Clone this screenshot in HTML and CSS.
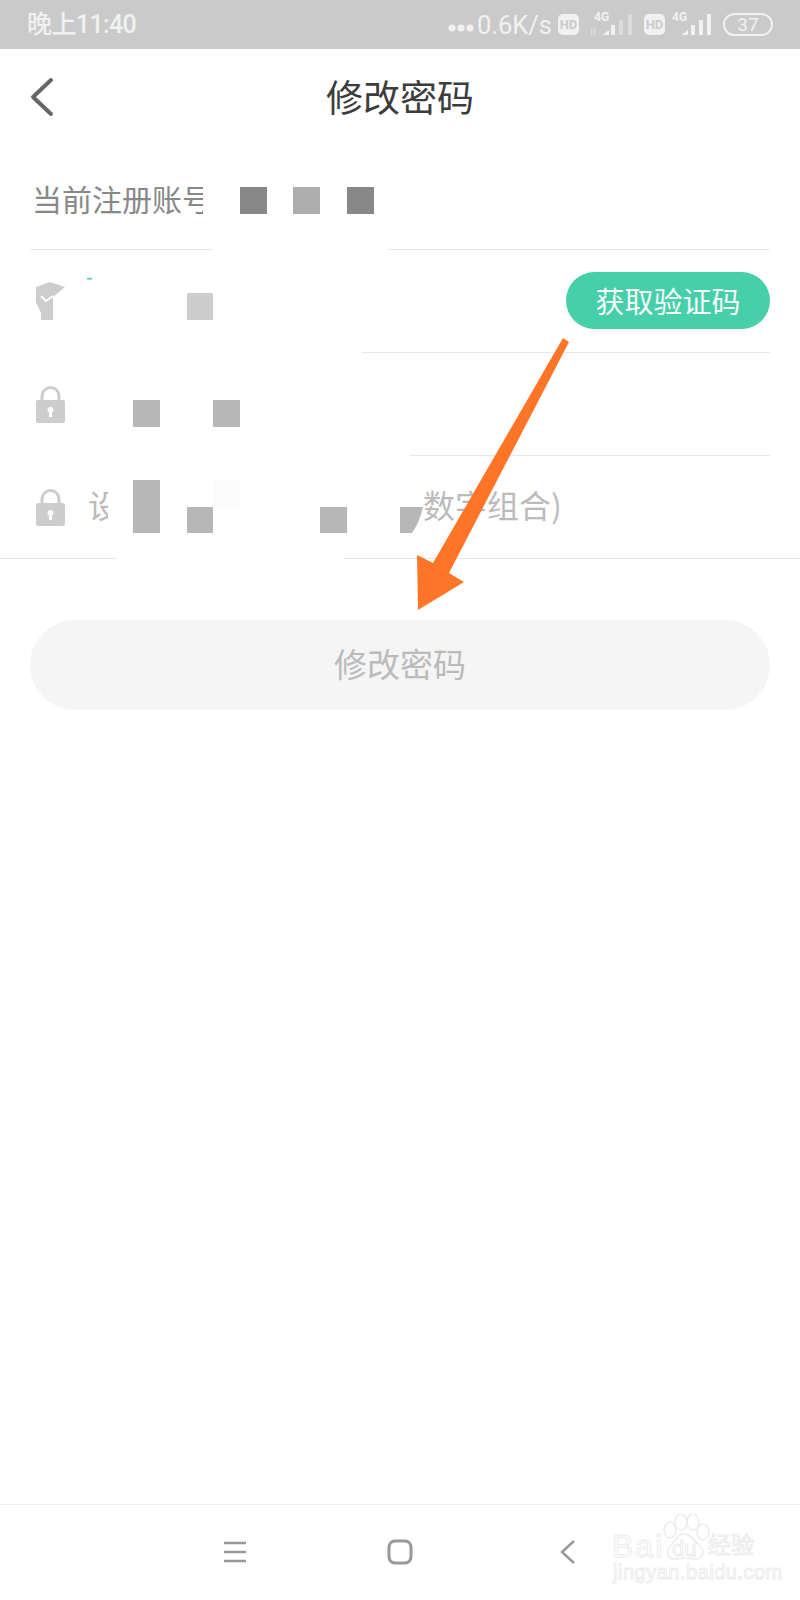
FILE: index.html
```html
<!DOCTYPE html>
<html lang="zh-CN">
<head>
    <meta charset="UTF-8">
    <title>修改密码</title>
    <link rel="stylesheet" href="styles.css">
</head>
<body>
    <div class="page">
        <!-- статус -->
        <div class="status-bar">
            <span class="time">晚上11:40</span>
            <div class="status-right">
                <svg class="dots" width="26" height="8" viewBox="0 0 26 8"><circle cx="4" cy="4" r="3.6"/><circle cx="13" cy="4" r="3.6"/><circle cx="22" cy="4" r="3.6"/></svg>
                <span class="speed">0.6K/s</span>
                <span class="hd hd-first">HD</span>
                <svg class="sim sim-first" width="44" height="34" viewBox="0 -4 44 34">
                    <text x="5" y="9" class="sim-text">4G</text>
                    <rect x="2" y="16" width="1.5" height="7" class="dim"/>
                    <rect x="5" y="16" width="1.5" height="7" class="dim"/>
                    <polygon points="14,22.500 20,18 20,23 14,23"/>
                    <rect x="22" y="13" width="4" height="10"/>
                    <rect x="30" y="8" width="4" height="15" class="dim"/>
                    <rect x="39" y="2" width="4" height="21" class="dim"/>
                </svg>
                <span class="hd hd-second">HD</span>
                <svg class="sim sim-second" width="40" height="34" viewBox="0 -4 40 34">
                    <text x="0" y="9" class="sim-text">4G</text>
                    <polygon points="10,22.500 16,18 16,23 10,23"/>
                    <rect x="19" y="13" width="4" height="10"/>
                    <rect x="27" y="8" width="4" height="15"/>
                    <rect x="35" y="2" width="4" height="21"/>
                </svg>
                <span class="battery">37</span>
            </div>
        </div>

        <header class="top">
            <svg class="back" width="24" height="40" viewBox="0 0 24 40"><polyline points="21,3 3,20 21,37"/></svg>
            <h1>修改密码</h1>
        </header>

        <div class="row">
            <span class="account-label">当前注册账号</span>
        </div>

        <div class="row">
            <svg class="field-icon" width="29" height="38" viewBox="0 0 29 38">
                <polygon points="0,5 14,0 29,5 17,15 17,38 5,38 5,31 0,20"/>
                <polyline points="5,14 10,19 17,14" class="tick"/>
            </svg>
            <button class="code-btn">获取验证码</button>
        </div>

        <div class="row">
            <svg class="field-icon" width="29" height="37" viewBox="0 0 29 37">
                <path d="M6 16V10a8.500 8.500 0 0 1 17 0v6" class="shackle"/>
                <rect x="0" y="14" width="29" height="23" rx="2"/>
                <path d="M14.500 21a3 3 0 0 1 1.500 5.600V31h-3v-4.400A3 3 0 0 1 14.500 21z" class="keyhole"/>
            </svg>
        </div>

        <div class="row row-last">
            <svg class="field-icon" width="29" height="37" viewBox="0 0 29 37">
                <path d="M6 16V10a8.500 8.500 0 0 1 17 0v6" class="shackle"/>
                <rect x="0" y="14" width="29" height="23" rx="2"/>
                <path d="M14.500 21a3 3 0 0 1 1.500 5.600V31h-3v-4.400A3 3 0 0 1 14.500 21z" class="keyhole"/>
            </svg>
            <span class="hint hint-first">设</span>
            <span class="hint hint-end">数字组合)</span>
        </div>

        <button class="submit">修改密码</button>

        <div class="spacer"></div>

        <nav class="bottom-nav">
            <svg class="nav-menu" width="24" height="24" viewBox="0 0 24 24"><path d="M1 3h22M1 12h22M1 21h22"/></svg>
            <svg class="nav-home" width="26" height="26" viewBox="0 0 26 26"><rect x="2" y="2" width="22" height="22" rx="6"/></svg>
            <svg class="nav-back" width="16" height="26" viewBox="0 0 16 26"><polyline points="14,2 2,13 14,24"/></svg>
        </nav>

        <!-- мозаика и стрелка поверх скриншота -->
        <svg class="overlay" width="800" height="1600" viewBox="0 0 800 1600">
            <rect x="203" y="175" width="30" height="45" fill="#fff"/>
            <rect x="108" y="480" width="25" height="50" fill="#fff"/>
            <rect x="213" y="245" width="175" height="8" fill="#fff"/>
            <rect x="0" y="350" width="362" height="5" fill="#fff"/>
            <rect x="0" y="453" width="410" height="5" fill="#fff"/>
            <rect x="117" y="556" width="226" height="5" fill="#fff"/>

            <rect x="240" y="187" width="27" height="27" fill="#888"/>
            <rect x="293" y="187" width="27" height="27" fill="#aeaeae"/>
            <rect x="347" y="187" width="27" height="27" fill="#888"/>
            <rect x="187" y="293" width="26" height="27" fill="#cdcdcd"/>
            <rect x="133" y="400" width="27" height="27" fill="#b7b7b7"/>
            <rect x="213" y="400" width="27" height="27" fill="#b7b7b7"/>
            <rect x="133" y="480" width="27" height="53" fill="#b7b7b7"/>
            <rect x="213" y="480" width="27" height="27" fill="#fcfcfc"/>
            <rect x="187" y="507" width="26" height="26" fill="#b7b7b7"/>
            <rect x="320" y="507" width="27" height="26" fill="#b7b7b7"/>
            <path d="M400 507h23c-2 9-6 19-11 26h-12z" fill="#b7b7b7"/>
            <rect x="87" y="278" width="5" height="1.500" fill="#46cfa9"/>

            <polygon points="563,338 569,342 449,573 464,582 418,610 417,555 433,563" fill="#ff7527"/>
        </svg>

        <div class="watermark">
            <svg class="paw" width="50" height="50" viewBox="0 0 50 50">
                <ellipse cx="10" cy="16" rx="6" ry="8"/>
                <ellipse cx="21" cy="8" rx="6" ry="8"/>
                <ellipse cx="33" cy="8" rx="6" ry="8"/>
                <ellipse cx="43" cy="18" rx="6" ry="8"/>
                <path d="M24 20c8 0 10 8 16 12 6 6 2 14-6 13-6-1-12-1-18 0-8 1-11-7-6-13 6-4 6-12 14-12z"/>
            </svg>
            <span class="wm-bai">Bai</span>
            <span class="wm-du">du</span>
            <span class="wm-jy">经验</span>
            <span class="wm-url">jingyan.baidu.com</span>
        </div>
    </div>
</body>
</html>
```

FILE: styles.css
```css
* {
    margin: 0;
    padding: 0;
    box-sizing: border-box;
    font-family: "Noto Sans CJK SC", "Noto Sans", sans-serif;
}

body {
    background: #fff;
}

.page {
    width: 800px;
    height: 1600px;
    position: relative;
    display: flex;
    flex-direction: column;
    overflow: hidden;
}

/* Статус */
.status-bar {
    height: 49px;
    background: #cacaca;
    color: #f1f1f1;
    display: flex;
    align-items: center;
    justify-content: space-between;
    padding: 0 27px;
}

.time {
    font-family: Roboto, "Noto Sans CJK SC", sans-serif;
    font-size: 25px;
    font-weight: 500;
    letter-spacing: -0.6px;
    line-height: 49px;
}

.status-right {
    display: flex;
    align-items: center;
}

.dots {
    fill: #f1f1f1;
    margin-top: 6px;
}

.speed {
    font-family: Roboto, sans-serif;
    font-size: 25.5px;
    margin-left: 3px;
}

.hd {
    width: 21px;
    height: 21px;
    border-radius: 5px;
    background: #f1f1f1;
    color: #cacaca;
    font-family: Roboto, sans-serif;
    font-size: 13px;
    font-weight: 700;
    line-height: 21px;
    text-align: center;
}

.hd-first {
    margin-left: 6px;
}

.sim {
    fill: #f1f1f1;
}

.sim-first {
    margin-left: 10px;
}

.sim-text {
    font-family: Roboto, sans-serif;
    font-size: 12px;
    font-weight: 700;
}

.dim {
    fill: #dcdcdc;
}

.hd-second {
    margin-left: 11px;
}

.sim-second {
    margin-left: 7px;
}

.battery {
    width: 50px;
    height: 23px;
    margin-left: 11px;
    border: 2px solid #f1f1f1;
    border-radius: 12px;
    font-family: Roboto, sans-serif;
    font-size: 19px;
    line-height: 19px;
    text-align: center;
}

/* Шапка */
.top {
    height: 98px;
    display: flex;
    align-items: center;
    justify-content: center;
    position: relative;
}

.top h1 {
    font-size: 37px;
    font-weight: 400;
    color: #3c3c3c;
    margin-bottom: 4px;
}

.back {
    position: absolute;
    left: 30px;
    top: 28px;
    fill: none;
    stroke: #666;
    stroke-width: 4;
    stroke-linecap: round;
    stroke-linejoin: round;
}

/* Поля формы */
.row {
    height: 103px;
    margin: 0 30px;
    border-bottom: 1px solid #e8e8e8;
    display: flex;
    align-items: center;
}

.row-last {
    margin: 0;
    padding: 0 30px;
}

.account-label {
    margin-left: 2px;
    white-space: nowrap;
    font-size: 30px;
    color: #888;
}

.field-icon {
    margin-left: 6px;
    fill: #cdcdcd;
    flex-shrink: 0;
}

.tick {
    fill: none;
    stroke: #fff;
    stroke-width: 2;
}

.shackle {
    fill: none;
    stroke: #cdcdcd;
    stroke-width: 3;
}

.keyhole {
    fill: #fff;
}

.hint {
    margin-bottom: 6px;
    font-size: 32px;
    color: #bbb;
}

.hint-first {
    margin-left: 23px;
}

.hint-end {
    margin-left: 303px;
}

.code-btn {
    width: 204px;
    height: 57px;
    margin-left: auto;
    margin-top: -2px;
    border: none;
    border-radius: 29px;
    background: #46cfa9;
    color: #f4fbf9;
    font-size: 29px;
}

.submit {
    height: 90px;
    margin: 61px 30px 0;
    padding-bottom: 4px;
    border: none;
    border-radius: 45px;
    background: #f5f5f5;
    color: #bbb;
    font-size: 33px;
}

.spacer {
    flex: 1;
}

/* Нижняя панель */
.bottom-nav {
    height: 96px;
    border-top: 1px solid #eee;
    position: relative;
}

.bottom-nav svg {
    position: absolute;
    fill: none;
    stroke: #999;
}

.nav-menu {
    left: 223px;
    top: 35px;
    stroke-width: 2.500;
}

.nav-home {
    left: 387px;
    top: 34px;
    stroke-width: 3;
}

.nav-back {
    left: 560px;
    top: 34px;
    stroke-width: 2.500;
}

.overlay {
    position: absolute;
    left: 0;
    top: 0;
}

/* Водяной знак */
.watermark {
    position: absolute;
    left: 0;
    top: 0;
    width: 800px;
    height: 1600px;
    color: #fff;
    -webkit-text-stroke: 1px #ececec;
}

.watermark span {
    position: absolute;
    font-family: "Liberation Sans", sans-serif;
    white-space: nowrap;
}

.paw {
    position: absolute;
    left: 660px;
    top: 1514px;
    fill: #fff;
    stroke: #ececec;
    stroke-width: 1.500;
}

.wm-bai {
    left: 612px;
    top: 1528px;
    font-size: 32px;
    letter-spacing: 2px;
}

.wm-du {
    left: 672px;
    top: 1536px;
    font-size: 22px;
}

.watermark .wm-jy {
    left: 708px;
    top: 1526px;
    font-size: 23px;
    font-family: "Noto Sans CJK SC", sans-serif;
}

.wm-url {
    left: 613px;
    top: 1561px;
    font-size: 20px;
    letter-spacing: 0.500px;
}
```
